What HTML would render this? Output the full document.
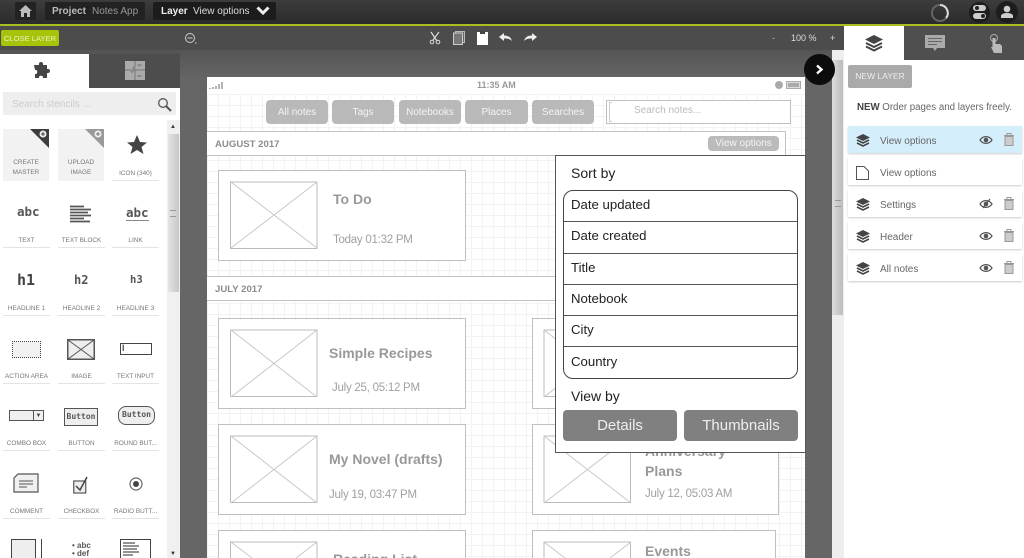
<!DOCTYPE html>
<html><head><meta charset="utf-8"><style>
*{box-sizing:border-box}
html,body{margin:0;padding:0;width:1024px;height:558px;overflow:hidden;background:#666;font-family:"Liberation Sans",sans-serif}
#w{position:absolute;left:0;top:0;width:1024px;height:558px;overflow:hidden;filter:blur(.35px)}
.a{position:absolute}
.t{position:absolute;white-space:nowrap;line-height:1}
.card{position:absolute;border:1.5px solid #c0c0c0;background:#fff}
.nav{position:absolute;top:100px;height:24px;background:#b9b9b9;border-radius:4px;color:#f4f4f4;font-size:10px;line-height:26px;text-align:center}
.hd{position:absolute;left:207px;height:25px;border:1.5px solid #c4c4c4;border-left:0;background:#fff;color:#8c8c8c;font-weight:bold;font-size:9.6px;line-height:25px;padding-left:8px}
.ti{color:#999;font-weight:bold;font-size:14px}
.da{color:#a0a0a0;font-size:11.5px;letter-spacing:-.25px}
.lb{position:absolute;width:47px;text-align:center;font-size:6.4px;color:#777;border-bottom:1px solid #e4e4e4;height:13px;line-height:11px;white-space:nowrap}
.row{position:absolute;left:848px;width:174px;height:27px;background:#fff;box-shadow:0 1px 2px #ccc;color:#666;font-size:10px;line-height:31px;padding-left:32px}
.sr{position:absolute;left:0;right:0;height:31.3px;border-bottom:1.5px solid #555;font-size:13.2px;line-height:27px;padding-left:7px;color:#222}
</style></head><body><div id="w">
<div class="a" style="left:0;top:0;width:1024px;height:25px;background:linear-gradient(#3c3c3c,#2a2a2a)"></div>
<div class="a" style="left:0;top:24px;width:1024px;height:2px;background:#aabd1e"></div>
<div class="a" style="left:0;top:26px;width:845px;height:24px;background:#4c4c4c"></div>
<div class="a" style="left:180px;top:50px;width:652px;height:30px;background:linear-gradient(#555,#666)"></div>
<div class="a" style="left:0;top:50px;width:180px;height:4px;background:#555"></div>

<div class="a" style="left:15px;top:2px;width:21px;height:18px;background:#222;border-radius:2px"></div>
<svg class="a" style="left:19px;top:5px" width="13" height="12" viewBox="0 0 13 12"><path d="M6.500 0L13 6H11V12H8V8H5V12H2V6H0Z" fill="#bbb"/></svg>
<div class="a" style="left:45px;top:2px;width:100px;height:18px;background:#222;border-radius:2px"></div>
<div class="t" style="left:52px;top:7px;font-size:10px;font-weight:bold;color:#bbb">Project</div>
<div class="t" style="left:92px;top:7px;font-size:10px;color:#999">Notes App</div>
<div class="a" style="left:153px;top:2px;width:123px;height:18px;background:#1c1c1c;border-radius:2px"></div>
<div class="t" style="left:161px;top:7px;font-size:10px;font-weight:bold;color:#eee">Layer</div>
<div class="t" style="left:193px;top:7px;font-size:10px;color:#ddd">View options</div>
<svg class="a" style="left:256px;top:6px" width="14" height="10" viewBox="0 0 14 10"><path d="M1.500 1.500L7 7L12.500 1.500" fill="none" stroke="#eee" stroke-width="3"/></svg>
<svg class="a" style="left:929px;top:2px" width="22" height="22" viewBox="0 0 22 22"><circle cx="11" cy="11" r="8" fill="none" stroke="#666" stroke-width="2"/><path d="M11 3A8 8 0 0 1 17 16" fill="none" stroke="#ddd" stroke-width="2"/></svg>
<div class="a" style="left:969px;top:2px;width:21px;height:21px;border-radius:50%;background:#1d1d1d"></div>
<div class="a" style="left:973px;top:5px;width:13px;height:6px;border-radius:3px;background:#ccc"></div>
<div class="a" style="left:973px;top:13px;width:13px;height:6px;border-radius:3px;background:#ccc"></div>
<div class="a" style="left:975px;top:6px;width:4px;height:4px;border-radius:50%;background:#222"></div>
<div class="a" style="left:981px;top:14px;width:4px;height:4px;border-radius:50%;background:#222"></div>
<div class="a" style="left:996px;top:1px;width:22px;height:22px;border-radius:50%;background:#1d1d1d"></div>
<svg class="a" style="left:1000px;top:5px" width="14" height="14" viewBox="0 0 14 14"><circle cx="7" cy="4" r="3.300" fill="#ccc"/><path d="M1 13V11C1 9 4 8 7 8S13 9 13 11V13Z" fill="#ccc"/></svg>

<div class="a" style="left:1px;top:30px;width:58px;height:16px;background:#a8c40a;border-radius:2px;color:#e8f0c0;font-size:7.6px;line-height:17px;text-align:center">CLOSE LAYER</div>
<svg class="a" style="left:184px;top:32px" width="14" height="13" viewBox="0 0 14 13"><circle cx="6" cy="6" r="4.500" fill="none" stroke="#ccc"/><path d="M3.500 6H8.500M11 11H12.500" stroke="#ccc"/></svg>
<svg class="a" style="left:429px;top:31px" width="12" height="14" viewBox="0 0 12 14"><path d="M2 1L8 10M10 1L4 9" stroke="#ddd" stroke-width="1.200" fill="none"/><circle cx="3" cy="11" r="1.800" fill="none" stroke="#ddd"/><circle cx="9" cy="11" r="1.800" fill="none" stroke="#ddd"/></svg>
<svg class="a" style="left:453px;top:31px" width="12" height="14" viewBox="0 0 12 14"><rect x="2.500" y=".5" width="9" height="11" fill="#666" stroke="#bbb"/><rect x=".5" y="2" width="9" height="11.500" fill="#777" stroke="#ccc"/></svg>
<svg class="a" style="left:477px;top:31px" width="11" height="14" viewBox="0 0 11 14"><rect y="1" width="11" height="13" fill="#fff"/><rect x="3" width="5" height="3" fill="#444"/></svg>
<svg class="a" style="left:499px;top:33px" width="14" height="9" viewBox="0 0 14 9"><path d="M0 4L5 0V2.500C9 2.500 12 4 13 8C11 6 9 5.500 5 5.500V8Z" fill="#eee"/></svg>
<svg class="a" style="left:523px;top:33px" width="14" height="9" viewBox="0 0 14 9"><path d="M14 4L9 0V2.500C5 2.500 2 4 1 8C3 6 5 5.500 9 5.500V8Z" fill="#eee"/></svg>
<div class="t" style="left:772px;top:34px;font-size:9px;color:#bbb">-</div>
<div class="t" style="left:791px;top:34px;font-size:9px;color:#ddd">100 %</div>
<div class="t" style="left:830px;top:34px;font-size:9px;color:#ddd">+</div>

<!-- left panel -->
<div class="a" style="left:0;top:54px;width:180px;height:504px;background:#fff"></div>
<div class="a" style="left:89px;top:54px;width:91px;height:34px;background:#4d4d4d"></div>
<svg class="a" style="left:34px;top:61px" width="20" height="19" viewBox="0 0 20 19"><path d="M0 4H5C4 0 10 0 9 4H13V8C17 7 17 13 13 12V17H9C10 14 4 14 5 17H1V13C4 14 4 8 1 9Z" fill="#444"/></svg>
<div class="a" style="left:125px;top:61px;width:20px;height:19px;background:#aaa"></div>
<svg class="a" style="left:125px;top:61px" width="20" height="19"><path d="M10 0V6C7 6 7 8 10 8V19M0 9H6C6 12 8 12 8 9H20M13 3C13 5 16 5 16 3M13 16C13 14 16 14 16 16" stroke="#777" fill="none"/></svg>
<div class="a" style="left:3px;top:92px;width:173px;height:23px;background:#eee"></div>
<div class="t" style="left:12px;top:100px;font-size:10px;color:#ccc">Search stencils ...</div>
<svg class="a" style="left:157px;top:97px" width="15" height="15" viewBox="0 0 15 15"><circle cx="6" cy="6" r="4.300" fill="none" stroke="#555" stroke-width="1.300"/><path d="M9 9L14 14" stroke="#555" stroke-width="2"/></svg>
<div class="a" style="left:167px;top:120px;width:13px;height:438px;background:#f0f0f0"></div>
<div class="a" style="left:168px;top:134px;width:11px;height:158px;background:linear-gradient(90deg,#e4e4e4,#c6c6c6)"></div>
<div class="t" style="left:170px;top:124px;font-size:6px;color:#333">▲</div>
<div class="t" style="left:170px;top:551px;font-size:6px;color:#333">▼</div>
<div class="a" style="left:170px;top:210px;width:6px;height:7px;border-top:1px solid #999;border-bottom:1px solid #999"></div>

<div class="a" style="left:3px;top:129px;width:46px;height:52px;background:#f2f2f2"></div>
<div class="a" style="left:58px;top:129px;width:46px;height:52px;background:#f2f2f2"></div>
<svg class="a" style="left:30px;top:129px" width="19" height="19"><path d="M0 0H19V19Z" fill="#3d3d3d"/><circle cx="13" cy="5" r="3.500" fill="#eee"/><path d="M11 5H15M13 3V7" stroke="#444"/></svg>
<svg class="a" style="left:85px;top:129px" width="19" height="19"><path d="M0 0H19V19Z" fill="#999"/><circle cx="13" cy="5" r="3.500" fill="#eee"/><path d="M11 5H15M13 3V7" stroke="#777"/></svg>
<div class="t" style="left:3px;top:158px;width:46px;text-align:center;font-size:6.4px;line-height:9.500px;color:#777;white-space:normal">CREATE<br>MASTER</div>
<div class="t" style="left:58px;top:158px;width:46px;text-align:center;font-size:6.4px;line-height:9.500px;color:#777;white-space:normal">UPLOAD<br>IMAGE</div>
<svg class="a" style="left:126px;top:134px" width="22" height="22" viewBox="0 0 22 22"><path d="M11 1L14 8L21 8.500L15.500 13L17.500 20L11 16L4.500 20L6.500 13L1 8.500L8 8Z" fill="#444"/></svg>

<div class="lb" style="left:112px;top:168px">ICON (340)</div>
<div class="lb" style="left:3px;top:235px">TEXT</div><div class="lb" style="left:58px;top:235px">TEXT BLOCK</div><div class="lb" style="left:112px;top:235px">LINK</div>
<div class="lb" style="left:3px;top:303px">HEADLINE 1</div><div class="lb" style="left:58px;top:303px">HEADLINE 2</div><div class="lb" style="left:112px;top:303px">HEADLINE 3</div>
<div class="lb" style="left:3px;top:371px">ACTION AREA</div><div class="lb" style="left:58px;top:371px">IMAGE</div><div class="lb" style="left:112px;top:371px">TEXT INPUT</div>
<div class="lb" style="left:3px;top:438px">COMBO BOX</div><div class="lb" style="left:58px;top:438px">BUTTON</div><div class="lb" style="left:112px;top:438px">ROUND BUT...</div>
<div class="lb" style="left:3px;top:506px">COMMENT</div><div class="lb" style="left:58px;top:506px">CHECKBOX</div><div class="lb" style="left:112px;top:506px">RADIO BUTT...</div>

<div class="t" style="left:17px;top:206px;font-size:12.500px;font-weight:bold;color:#555;font-family:'DejaVu Sans Mono','Liberation Mono',monospace">abc</div>
<div class="t" style="left:126px;top:207px;font-size:12.500px;font-weight:bold;color:#555;font-family:'DejaVu Sans Mono','Liberation Mono',monospace;border-bottom:1px solid #888">abc</div>
<svg class="a" style="left:70px;top:205px" width="24" height="20"><path d="M0 1.500H14M0 4.500H21M0 7.500H18M0 10.500H21M0 13.500H14M0 16.500H20" stroke="#555" stroke-width="1.700"/></svg>
<div class="t" style="left:17px;top:273px;font-size:15px;font-weight:bold;color:#444;font-family:'DejaVu Sans Mono',monospace">h1</div>
<div class="t" style="left:74px;top:274px;font-size:12px;font-weight:bold;color:#555;font-family:'DejaVu Sans Mono',monospace">h2</div>
<div class="t" style="left:130px;top:275px;font-size:10.500px;font-weight:bold;color:#555;font-family:'DejaVu Sans Mono',monospace">h3</div>
<div class="a" style="left:12px;top:341px;width:29px;height:17px;border:1.500px dotted #444;background:#f2f2f2"></div>
<svg class="a" style="left:67px;top:339px" width="28" height="21"><rect x=".75" y=".75" width="26.500" height="19.500" fill="#eee" stroke="#555" stroke-width="1.500"/><path d="M1 1L27 20M27 1L1 20" stroke="#555"/></svg>
<div class="a" style="left:120px;top:343px;width:32px;height:12px;border:1px solid #444;background:#fff"></div>
<div class="t" style="left:122px;top:344px;font-size:9px;color:#555;font-weight:bold">I</div>
<div class="a" style="left:9px;top:410px;width:35px;height:11px;border:1px solid #555;background:#f0f0f0"></div>
<div class="a" style="left:33px;top:410px;width:11px;height:11px;border:1px solid #555;font-size:6px;text-align:center;line-height:10px;color:#444">▼</div>
<div class="a" style="left:64px;top:408px;width:34px;height:18px;border:1.500px solid #555;background:#eee;font-size:8px;font-weight:bold;color:#555;text-align:center;line-height:15px;font-family:'DejaVu Sans Mono',monospace">Button</div>
<div class="a" style="left:118px;top:406px;width:37px;height:19px;border:1.500px solid #555;border-radius:8px;background:#eee;font-size:8px;font-weight:bold;color:#555;text-align:center;line-height:16px;font-family:'DejaVu Sans Mono',monospace">Button</div>
<svg class="a" style="left:13px;top:473px" width="26" height="20"><path d="M5 1H25V19H1V5Z" fill="#f0f0f0" stroke="#555" stroke-width="1.200"/><path d="M6 8H20M6 11H20M6 14H14" stroke="#555"/></svg>
<svg class="a" style="left:73px;top:476px" width="18" height="18"><rect x=".75" y="5" width="12" height="12" fill="#eee" stroke="#555" stroke-width="1.200"/><path d="M3 10L7 14L14 1" stroke="#444" stroke-width="1.500" fill="none"/></svg>
<svg class="a" style="left:129px;top:477px" width="14" height="14"><circle cx="7" cy="7" r="6" fill="none" stroke="#666" stroke-width="1.200"/><circle cx="7" cy="7" r="3" fill="#444"/></svg>
<div class="a" style="left:11px;top:539px;width:31px;height:19px;border:1px solid #444;border-bottom:0;background:#eee"></div>
<div class="a" style="left:35px;top:539px;width:6px;height:19px;border-left:1px solid #444;background:#fff"></div>
<div class="t" style="left:72px;top:542px;font-size:8px;line-height:8px;color:#555;font-weight:bold;white-space:normal;width:24px;height:16px;overflow:hidden">• abc<br>• def</div>
<div class="a" style="left:120px;top:539px;width:31px;height:19px;border:1px solid #444;border-bottom:0;background:#fff"></div>
<svg class="a" style="left:123px;top:542px" width="18" height="16"><path d="M0 1H12M0 4H16M0 7H14M0 10H16M0 13H10" stroke="#555" stroke-width="1.200"/></svg>

<!-- page -->
<div class="a" style="left:207px;top:77px;width:598px;height:481px;background-color:#fff"></div>
<div class="a" style="left:207px;top:94px;width:598px;height:464px;background-image:linear-gradient(#f3f3f3 1px,transparent 1px),linear-gradient(90deg,#f3f3f3 1px,transparent 1px);background-size:11px 11px"></div>
<svg class="a" style="left:209px;top:81px" width="16" height="9"><path d="M1 8V7M4 8V6M7 8V5M10 8V3M13 8V1" stroke="#aaa" stroke-width="1.800"/></svg>
<div class="t" style="left:477px;top:81px;font-size:9px;font-weight:bold;color:#999">11:35 AM</div>
<div class="a" style="left:775px;top:81px;width:8px;height:8px;border-radius:50%;background:#aaa"></div>
<div class="a" style="left:786px;top:81px;width:15px;height:8px;border:1px solid #aaa;background:#aaa;box-shadow:inset 0 0 0 1px #ddd"></div>

<div class="nav" style="left:266px;width:62px">All notes</div>
<div class="nav" style="left:332px;width:62px">Tags</div>
<div class="nav" style="left:399px;width:62px">Notebooks</div>
<div class="nav" style="left:465px;width:63px">Places</div>
<div class="nav" style="left:532px;width:62px">Searches</div>
<div class="a" style="left:606px;top:100px;width:185px;height:24px;border:1.500px solid #c0c0c0;background:#fff"></div>
<div class="a" style="left:609px;top:102px;width:3px;height:20px;border:1px solid #ccc;border-right:0"></div>
<div class="t" style="left:634px;top:106px;font-size:10px;color:#bbb">Search notes...</div>

<div class="hd" style="top:131px;width:579px">AUGUST 2017</div>
<div class="a" style="left:708px;top:136px;width:71px;height:15px;border-radius:4px;background:#bbb;color:#f4f4f4;font-size:10px;line-height:16px;text-align:center">View options</div>
<div class="hd" style="top:276px;width:579px">JULY 2017</div>

<div class="card" style="left:218px;top:170px;width:248px;height:91px"></div>
<div class="card" style="left:218px;top:318px;width:248px;height:91px"></div>
<div class="card" style="left:218px;top:424px;width:248px;height:91px"></div>
<div class="card" style="left:218px;top:530px;width:248px;height:28px;border-bottom:0"></div>
<div class="card" style="left:532px;top:318px;width:247px;height:91px"></div>
<div class="card" style="left:532px;top:424px;width:247px;height:91px"></div>
<div class="card" style="left:532px;top:530px;width:244px;height:28px;border-bottom:0"></div>
<svg class="a" style="left:0;top:0" width="1024" height="558" fill="#fff" stroke="#c8c8c8"><g>
<rect x="230.500" y="182" width="86.500" height="66.500" stroke="#bbb"/><path d="M231 182L317 248M317 182L231 248"/>
<rect x="230.500" y="330" width="86.500" height="66.500" stroke="#bbb"/><path d="M231 330L317 397M317 330L231 397"/>
<rect x="230.500" y="436" width="86.500" height="66.500" stroke="#bbb"/><path d="M231 436L317 503M317 436L231 503"/>
<path d="M230.500 558V542H317V558" stroke="#bbb"/><path d="M231 542L252 558M317 542L296 558"/>
<rect x="544" y="330" width="86.500" height="66.500" stroke="#bbb"/><path d="M544 330L631 397M631 330L544 397"/>
<rect x="544" y="436" width="86.500" height="66.500" stroke="#bbb"/><path d="M544 436L631 503M631 436L544 503"/>
<path d="M544 558V542H630.500V558" stroke="#bbb"/><path d="M544 542L565 558M631 542L610 558"/>
</g></svg>
<div class="t ti" style="left:333px;top:192px">To Do</div>
<div class="t da" style="left:333px;top:235px">Today 01:32 PM</div>
<div class="t ti" style="left:329px;top:346px">Simple Recipes</div>
<div class="t da" style="left:332px;top:383px">July 25, 05:12 PM</div>
<div class="t ti" style="left:329px;top:452px">My Novel (drafts)</div>
<div class="t da" style="left:329px;top:490px">July 19, 03:47 PM</div>
<div class="a" style="left:333px;top:552px;width:120px;height:6px;overflow:hidden"><div class="t ti" style="left:0;top:0">Reading List</div></div>
<div class="t ti" style="left:645px;top:444px">Anniversary</div>
<div class="t ti" style="left:645px;top:464px">Plans</div>
<div class="t da" style="left:645px;top:489px">July 12, 05:03 AM</div>
<div class="t ti" style="left:645px;top:544px">Events</div>

<!-- popup -->
<div class="a" style="left:555px;top:155px;width:251px;height:298px;background:#fff;border:1px solid #555"></div>
<div class="t" style="left:571px;top:166px;font-size:14px;color:#222">Sort by</div>
<div class="a" style="left:563px;top:190px;width:235px;height:189px;border:1px solid #444;border-radius:10px;overflow:hidden;background:#fff">
<div class="sr" style="top:0">Date updated</div><div class="sr" style="top:31.300px">Date created</div><div class="sr" style="top:62.600px">Title</div><div class="sr" style="top:93.900px">Notebook</div><div class="sr" style="top:125.200px">City</div><div class="sr" style="top:156.500px;border:0">Country</div>
</div>
<div class="t" style="left:571px;top:389px;font-size:14px;color:#222">View by</div>
<div class="a" style="left:563px;top:410px;width:114px;height:31px;border-radius:4px;background:#808080;color:#eee;font-size:15px;line-height:31px;text-align:center">Details</div>
<div class="a" style="left:684px;top:410px;width:114px;height:31px;border-radius:4px;background:#808080;color:#eee;font-size:15px;line-height:31px;text-align:center">Thumbnails</div>

<!-- scroll + circle -->
<div class="a" style="left:832px;top:50px;width:12px;height:508px;background:#eee"></div>
<div class="a" style="left:832px;top:60px;width:11px;height:255px;background:linear-gradient(90deg,#dcdcdc,#bcbcbc)"></div>
<div class="a" style="left:835px;top:200px;width:6px;height:7px;border-top:1px solid #999;border-bottom:1px solid #999"></div>
<div class="a" style="left:804px;top:54px;width:31px;height:31px;border-radius:50%;background:#0c0c0c"></div>
<svg class="a" style="left:815px;top:64px" width="9" height="11"><path d="M2 1.500L6.500 5.500L2 9.500" fill="none" stroke="#fff" stroke-width="2.400"/></svg>

<!-- right panel -->
<div class="a" style="left:844px;top:26px;width:180px;height:532px;background:#fff"></div>
<div class="a" style="left:904px;top:26px;width:120px;height:34px;background:#4f4f4f"></div>
<svg class="a" style="left:864px;top:35px" width="20" height="17" viewBox="0 0 20 17"><path d="M10 0L19 4.500L10 9L1 4.500Z" fill="#444"/><path d="M2 8L10 12L18 8M2 11.500L10 15.500L18 11.500" fill="none" stroke="#444" stroke-width="2"/></svg>
<svg class="a" style="left:925px;top:35px" width="20" height="18"><path d="M0 0H20V13H12L10 16L8 13H0Z" fill="#aaa"/><path d="M3 3.500H17M3 6.500H17M3 9.500H12" stroke="#666"/></svg>
<svg class="a" style="left:988px;top:33px" width="16" height="21"><circle cx="6" cy="5" r="3.500" fill="none" stroke="#aaa"/><path d="M4.500 5H7.500V11H12L14 13V20H6L3 14H4.500Z" fill="#bbb"/></svg>
<div class="a" style="left:848px;top:65px;width:64px;height:23px;background:#aaa;border-radius:2px;color:#eee;font-size:8.500px;line-height:23px;text-align:center">NEW LAYER</div>
<div class="t" style="left:857px;top:103px;font-size:9.700px;color:#666"><b style="color:#444">NEW</b> Order pages and layers freely.</div>

<div class="row" style="top:126px;background:#d4eefb">View options</div>
<div class="row" style="top:158px">View options</div>
<div class="row" style="top:190px">Settings</div>
<div class="row" style="top:222px">Header</div>
<div class="row" style="top:254px">All notes</div>
<svg class="a" style="left:0;top:0" width="1024" height="558">
<defs>
<g id="ly"><path d="M7 0L14 3.500L7 7L0 3.500Z" fill="#444"/><path d="M1 6L7 9L13 6M1 9L7 12L13 9" fill="none" stroke="#444" stroke-width="1.600"/></g>
<g id="ey"><path d="M0 4C3 -.5 9 -.5 12 4C9 8.500 3 8.500 0 4Z" fill="none" stroke="#555" stroke-width="1.200"/><circle cx="6" cy="4" r="2.300" fill="#555"/></g>
<g id="tr"><path d="M0 2.500H10M3 2V.5H7V2" fill="none" stroke="#999" stroke-width="1"/><rect x="1" y="3.500" width="8" height="9" fill="#ccc" stroke="#999"/></g>
</defs>
<use href="#ly" x="856" y="134"/><use href="#ly" x="856" y="198"/><use href="#ly" x="856" y="230"/><use href="#ly" x="856" y="262"/>
<path d="M856.500 166.500H864L868.500 171V179.500H856.500Z" fill="#fff" stroke="#555"/>
<use href="#ey" x="980" y="136"/><use href="#ey" x="980" y="200"/><use href="#ey" x="980" y="232"/><use href="#ey" x="980" y="264"/>
<path d="M983 208L990 199" stroke="#555" stroke-width="1.200"/>
<use href="#tr" x="1004" y="133"/><use href="#tr" x="1004" y="197"/><use href="#tr" x="1004" y="229"/><use href="#tr" x="1004" y="261"/>
</svg>
</div></body></html>
